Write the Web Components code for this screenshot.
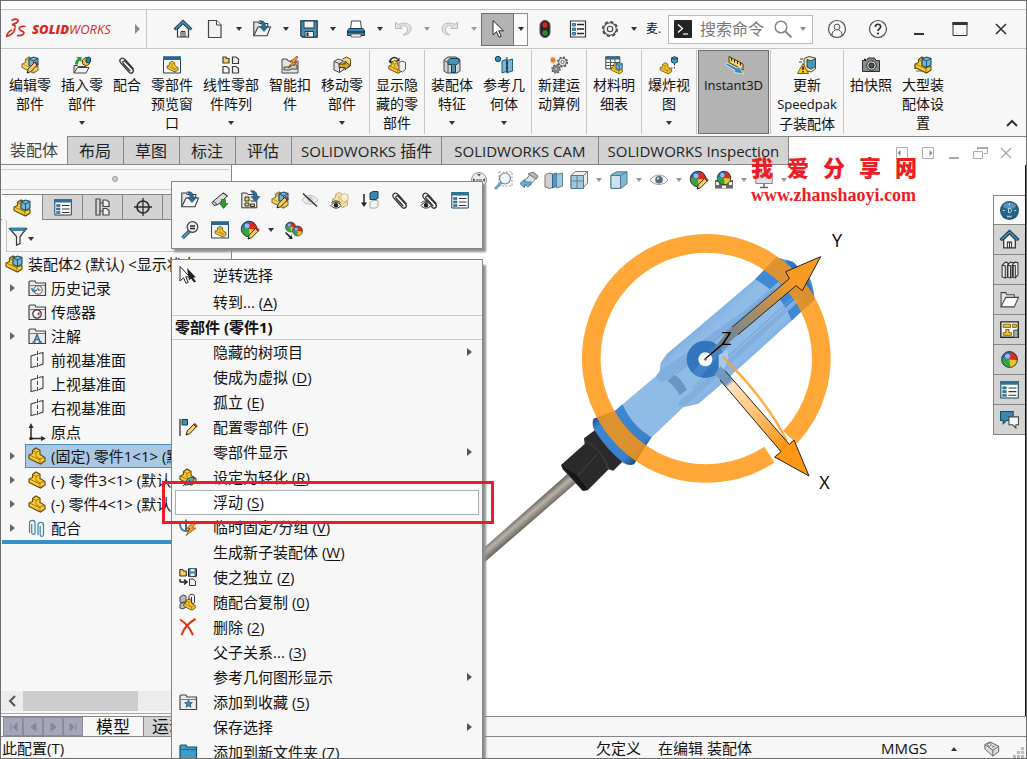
<!DOCTYPE html>
<html lang="zh-CN">
<head>
<meta charset="utf-8">
<title>SOLIDWORKS</title>
<style>
  html, body { margin: 0; height: 100%; }
  body { font: 15px/20px "Open Sans", "Noto Sans CJK SC", sans-serif; color: #111; background: #fff; }
</style>
</head>
<body>
<sw-window></sw-window>
<script>
/* ---------- icon fragments, drawn on an 18 x 18 grid ---------- */
const PART = `<path d="M4.500 3.500L8 1l4 2.300V7.500L17 10.500v3.500l-4.500 3L1 11.500V8l3.500-1.500z" fill="#f9cb2c" stroke="#5f430c" stroke-width="1.100"/><path d="M4.500 3.500L8 5.500v4l4 2.500v4.500M8 5.500l3.500-2M12 12l4.500-1.500M1.500 8L12 13" fill="none" stroke="#8a6412" stroke-width=".8"/>`;
const GHOST = `<path d="M4.500 3.500L8 1.500l3.500 2V8L16.500 10.500v3.500l-4.500 2.500L1.500 11V8l3-1.500z" fill="#f7e7ac" stroke="#c3ab67"/><path d="M1.500 8L12 13l4.500-2.500M8 9.500v-4L4.500 3.500" fill="none" stroke="#cbb880"/>`;
const CUBE = `<path d="M8 3l4.500-2L17 2.500v6.500L12.500 11.500 8 9.500z" fill="#79b4d3" stroke="#174f6b" stroke-width="1.100"/><path d="M8 3l4.500 2L17 2.500M12.500 5v6.500" fill="none" stroke="#174f6b"/>`;
const PENCIL = `<path d="M6 17l1.200-4 6.300-6.500 2.700 2.600-6.500 6.600z" fill="#f6cf62" stroke="#3c3323"/><path d="M13.500 6.500l1.200-1.200 2.700 2.600-1.200 1.200z" fill="#d03127" stroke="#5c1b16" stroke-width=".6"/><path d="M6 17l.6-2 1.500 1.400z" fill="#222"/>`;
const BALL = (x, y, r) => `<g transform="translate(${x} ${y}) scale(${r})"><circle r="1" fill="#36a43c"/><path d="M0 0L-.95-.2A1 1 0 0 1 .2-.98z" fill="#2c62c8"/><path d="M0 0L.2-.98A1 1 0 0 1 1 .1z" fill="#dd2a22"/><path d="M0 0L1 .1A1 1 0 0 1 .1 1z" fill="#e8c62a"/><circle cx="-.25" cy="-.4" r=".32" fill="#fff" opacity=".55"/><circle r="1" fill="none" stroke="#333" stroke-width=".12"/></g>`;
const FOLDER = (f = '#ececec', s = '#444') => `<path d="M1 16.500V3l1-1h5l1 2h9.500v12.500z" fill="${f}" stroke="${s}" stroke-width="1.200"/><path d="M2 6.500h15" stroke="${s}" stroke-width=".7"/>`;
const OPEN = `<path d="M.8 15.800V2h4.500l1 1.500h8.500v3" fill="#e4e4e4" stroke="#3d3d3d" stroke-width="1.100"/><path d="M.8 15.800L5 7h12.500l-3.500 8.800z" fill="#f6f6f6" stroke="#3d3d3d" stroke-width="1.100"/>`;
const DOWNARROW = `<path d="M6 1c4-.8 6.500.8 6.500 5.500H15.500L11 11.500 6.500 6.500h2.500c0-2.500-.5-4-3-5.500z" fill="#2c6d97" stroke="#174a68" stroke-width=".6"/>`;
const CLIP = (t = '') => `<g transform="${t}"><path d="M15.500 13L7 3.500C5.500 2 4 1.800 2.700 2.900s-1.200 2.600.2 4.200l8 9c1.200 1.200 2.600 1.400 3.700.4s1-2.300 0-3.500L7.500 5.500c-.7-.7-1.500-.8-2.200-.2s-.7 1.500 0 2.200l7 7.700" fill="none" stroke="#343434" stroke-width="1.300"/></g>`;
const TABLE = (h = '#2f7096') => `<path d="M.8 1.500h16.500v15.500H.8z" fill="#fff" stroke="#1c4257"/><path d="M.3 1h17.400v3.500H.3z" fill="${h}"/><path d="M2.500 6.500h3.500v2H2.500zM2.500 10h3.500v2H2.500zM2.500 13.500h3.500v2H2.500z" fill="#2f86b5" stroke="#174f6b" stroke-width=".5"/><path d="M8 7.500h7.500M8 11h7.500M8 14.500h7.500" stroke="#333"/>`;
const GEAR = (x, y, r, f) => `<g transform="translate(${x} ${y}) scale(${r})"><circle r=".85" fill="none" stroke="#4a4a4a" stroke-width=".28" stroke-dasharray=".34 .328"/><circle r=".7" fill="${f}" stroke="#4a4a4a" stroke-width=".16"/><circle r=".28" fill="#f7f7f7" stroke="#4a4a4a" stroke-width=".14"/></g>`;
const EYE = `<path d="M1 12.500c2.500-4 8-4 10 0-2.500 3.500-7.500 3.500-10 0z" fill="#fff" stroke="#333"/><circle cx="6" cy="12.300" r="2.200" fill="#222"/><path d="M1.500 9.500C4 7.500 8 7.500 10.500 9.500" stroke="#333" fill="none"/>`;
const DOT = (x, y) => `<path d="M${x} ${y}h3.500l2.500 2v4.500h-6z"/>`;
const HOUSE = `<path d="M3.500 9v8h11V9L9 3.500z" fill="#f4f4f4" stroke="#333" stroke-width="1.200"/><path d="M.6 9.500L9 1.500l8.400 8" fill="none" stroke="#173f57" stroke-width="3"/><path d="M1.500 9L9 2l7.500 7" fill="none" stroke="#4d9dc4" stroke-width="1.300"/><path d="M7 17v-5.500h4V17M9 11.500V17" fill="none" stroke="#333"/>`;

const ICONS = {
  home: HOUSE,
  new: `<path d="M2.500.5h8l4.500 4.500v12.500H2.500z" fill="#f1f1f1" stroke="#444" stroke-width="1.200"/><path d="M10.500.5V5H15" fill="#fff" stroke="#444"/>`,
  open: OPEN + DOWNARROW,
  folderopen: `<path d="M1 16V2.500h4.500l1 2h7V7" fill="#e3e3e3" stroke="#444"/><path d="M1 16L5.500 7h12L13.500 16z" fill="#fafafa" stroke="#444"/>`,
  save: `<path d="M.8.800h16.400v16.400H2.500L.8 15.500z" fill="#4a8fb3" stroke="#14323f" stroke-width="1.200"/><path d="M4 1h10v7H4z" fill="#f1f1f1" stroke="#1f3f4d"/><path d="M5 11.500h8.500V17H5z" fill="#eee" stroke="#1f3f4d"/><path d="M6.500 12.500h2V16h-2z" fill="#222"/>`,
  print: `<path d="M4.500 1h9l1 8.500H3.500z" fill="#fff" stroke="#444"/><path d="M2 8.500h14l1.500 2v5H.5v-5z" fill="#3c85ab" stroke="#143b50"/><path d="M.5 12h17" stroke="#143b50" stroke-width="1.500"/><path d="M4 14h10v3H4z" fill="#eee" stroke="#333" stroke-width=".7"/>`,
  undo: `<path d="M1.500 2v6.500h6.500L6 6.500c4.500-2 8 0 7.500 3.500-.3 2.300-2 4-4.500 5 5.500-.3 8-3 8-6.500C17 3.500 10 1.500 4 4.500z" fill="#e3e3e3" stroke="#b9b9b9"/>`,
  redo: `<path d="M16.500 2v6.500h-6.500L12 6.500c-4.500-2-8 0-7.500 3.500.3 2.300 2 4 4.500 5-5.500-.3-8-3-8-6.500C1 3.500 8 1.500 14 4.500z" fill="#e3e3e3" stroke="#b9b9b9"/>`,
  cursor: `<path d="M4 .5v14.500l3.500-3.300 2.500 5.600 2.200-1-2.500-5.500h4.800z" fill="#fff" stroke="#2b2b2b"/>`,
  traffic: `<rect x="4" y=".5" width="10" height="17" rx="5" fill="#262626" stroke="#555"/><circle cx="9" cy="5" r="2.700" fill="#d8241a"/><circle cx="9" cy="13" r="2.700" fill="#2f8f2c"/>`,
  options: `<path d="M1.500 1h15v16h-15z" fill="#fff" stroke="#333" stroke-width="1.200"/><path d="M3.500 3.500h3v2.500h-3zM3.500 8h3v2.500h-3zM3.500 12.500h3V15h-3z" fill="#5aa9d0" stroke="#1d5675" stroke-width=".8"/><path d="M8 4.500h7M8 9h7M8 13.500h7" stroke="#222" stroke-width="1.300"/>`,
  gear: `<circle cx="9" cy="9" r="7.300" fill="none" stroke="#444" stroke-width="1.600" stroke-dasharray="3.200 2.530"/><circle cx="9" cy="9" r="6.300" fill="#f7f7f7" stroke="#444" stroke-width="1.100"/><circle cx="9" cy="9" r="2.700" fill="none" stroke="#444" stroke-width="1.100"/>`,
  prompt: `<rect width="18" height="18" rx="1" fill="#242424"/><path d="M4 4.500L8.500 8.500 4 12.500" fill="none" stroke="#fff" stroke-width="1.300"/><path d="M9 14h5" stroke="#fff" stroke-width="1.200"/>`,
  search: `<circle cx="7" cy="7" r="5.800" fill="none" stroke="#858585" stroke-width="1.500"/><path d="M11 11l6.500 6.500" stroke="#858585" stroke-width="1.800"/>`,
  user: `<circle cx="9" cy="9" r="8.500" fill="none" stroke="#4d4d4d" stroke-width="1.200"/><circle cx="9" cy="7" r="2.900" fill="none" stroke="#4d4d4d"/><path d="M4 15c0-2.500 1.500-4.500 3.300-5M14 15c0-2.500-1.500-4.500-3.300-5" fill="none" stroke="#4d4d4d"/>`,
  help: `<circle cx="9" cy="9" r="8.500" fill="none" stroke="#4d4d4d" stroke-width="1.200"/><path d="M6.300 7c0-3.600 5.400-3.600 5.400-.2C11.700 8.800 9 8.700 9 11" fill="none" stroke="#333" stroke-width="1.700"/><circle cx="9" cy="13.500" r="1.100" fill="#333"/>`,
  min: `<path d="M4 14h10" stroke="#333" stroke-width="2"/>`,
  max: `<path d="M2 2.500h14v13H2z" fill="none" stroke="#333"/><path d="M1.500 2h15v3h-15z" fill="#333"/>`,
  close: `<path d="M4 4l10 10M14 4L4 14" stroke="#333" stroke-width="1.600"/>`,
  docprev: `<path d="M3.500 3.500h11v11h-11z" fill="none" stroke="#b0b0b0"/><path d="M7.500 6L4.500 9l3 3z" fill="#888"/>`,
  docnext: `<path d="M3.500 3.500h11v11h-11z" fill="none" stroke="#b0b0b0"/><path d="M10.500 6l3 3-3 3z" fill="#888"/>`,
  docmin: `<path d="M4 14h10" stroke="#aaa" stroke-width="2"/>`,
  docrest: `<path d="M6.500 6V3.500h10v6h-4" fill="none" stroke="#aaa"/><path d="M2.500 7.500h9v7h-9z" fill="#fff" stroke="#aaa"/><path d="M6 3h11v2H6z" fill="#aaa"/>`,
  docclose: `<path d="M4 4l10 10M14 4L4 14" stroke="#aaa" stroke-width="1.400"/>`,

  edit: `<g opacity=".75">${PART}</g>${CUBE}${PENCIL}`,
  insert: `<path d="M1 17V9.500h3.500l1 1h7v2" fill="#ddd" stroke="#444"/><path d="M1 17L4.500 11.500h11.500l-3 5.500z" fill="#f5f5f5" stroke="#444"/><path d="M2 8.500c0-3 1-5 3-6L3 1H8.500V6.500L7 4.500C5.500 5.500 5 6.500 5 8.500z" fill="#2c9a2f"/><path d="M9.500 4l3-2.500L16.500 3v5l-3 2-4-2z" fill="#f3c52d" stroke="#5c430f"/><path d="M13 2.500l2.500-1.500 2 1v4l-2 1L13 6z" fill="#2d7da8" stroke="#123f57"/>`,
  clip: CLIP(),
  preview: `<path d="M.5 1h17v16H.5z" fill="#f4f4f4" stroke="#26455a"/><path d="M0 .5h18v3.500H0z" fill="#2a678c"/><g transform="translate(3.500 4.500) scale(.68)">${PART}</g>`,
  pattern: `<g fill="#f1f1f1" stroke="#3c3c3c" stroke-width="1.200"><path d="M1 1h3l.5 1.500H7V7H1z" fill="#f2cf57"/>${DOT(10.5, 1)}${DOT(1, 10.500)}${DOT(10.500, 10.500)}</g>`,
  smart: `<path d="M1 17V3h5l1 2h10v12z" fill="#e2e2e2" stroke="#444"/><path d="M3 11h5l1-2h7v4h-6l-1 1H3z" fill="#cfcfcf" stroke="#444"/><path d="M16 0l-7 6h3l-4.500 6L16 6.500h-3L17 1z" fill="#f5a623" stroke="#7e3b08" stroke-width=".7"/>`,
  move: `<path d="M1 5.500l4-2.500 6 2v8.500l-4.500 3L1 14z" fill="#e3e3e3" stroke="#444"/><path d="M1 5.500L6.500 7.500l4.500-2.500M6.500 7.500v9" fill="none" stroke="#444"/><path d="M9.500 3l4-2L17.500 3v7l-4 2.500" fill="#f2d583" stroke="#6b5010"/><path d="M6 8h6V5l5 4.500-5 4.500V11.500H6z" fill="#d3a929" stroke="#3b2d07" stroke-width=".9"/>`,
  showhidden: `<g transform="translate(0 3.500) scale(.82)">${PART}</g><path d="M11 6.500l3-1.500 3.500 1.500v7l-3 2.500-3.500-1.500z" fill="#f1f1f1" stroke="#555"/><path d="M2 6C2 1.500 7 .5 9.500 3" fill="none" stroke="#222" stroke-width="1.500"/><path d="M8 5l3.500.5V1.500z" fill="#222"/><path d="M.5 4.500L2 7.500l3-2z" fill="#222"/>`,
  asmfeat: `<path d="M1 4l4-3h8l4 3v11l-3 2H4l-3-2z" fill="#d2d2d2" stroke="#444"/><path d="M5 4.500l2-2h9v4l-2 2h-1.500v8h-4V8.500H5z" fill="#4792bb" stroke="#153f56"/><path d="M8.500 8.500h5M1 4.500l4 2v10" stroke="#555" fill="none"/>`,
  refgeo: `<circle cx="3" cy="3" r="2.700" fill="#3b88b2" stroke="#184760"/><path d="M7 5l4.500-1.500v12L7 17zM12.500 4.500L17.500 3v12l-5 1.500z" fill="#7ab6d5" stroke="#235a78"/><path d="M12 1v17" stroke="#222" stroke-dasharray="3 1.500"/>`,
  motion: GEAR(12.500, 6, 5.600, '#eee') + GEAR(6, 13, 4.800, '#999') + `<path d="M3 0l.7 2 2-.7-.9 1.900 2 .8-2 .8.9 1.900-2-.7L3 8l-.7-2-2 .7.900-1.900L-.7 4l2-.8L.3 1.300l2 .7z" fill="#e2791c"/>`,
  bom: `<path d="M.8.800h14v12H.8z" fill="#fff" stroke="#444"/><path d="M.5.500h14.500v3H.5z" fill="#2c6d92"/><path d="M1 6.500h14M1 9.500h14M5.500 3v10M10 3v10" stroke="#555"/><g transform="translate(5.500 6) scale(.7)">${PART}${CUBE}</g>`,
  explode: `<g transform="translate(-.5 6) scale(.7)">${PART}</g><path d="M11.500 2l3-1.500L17.500 2v4l-3 1.500-3-1.500z" fill="#4b9ac4" stroke="#15475f"/><path d="M11.500 2l3 1.500L17.500 2" fill="none" stroke="#15475f"/><path d="M14.500 8v4H9" fill="none" stroke="#222" stroke-dasharray="1.500 1.500"/>`,
  ruler: `<path d="M4 .5l14 7.500v6L4 6.500z" fill="#f5d35d" stroke="#4b3a0c"/><path d="M6.500 2v3M9.500 3.500v3M12.500 5v3M15.500 6.500v3" stroke="#222"/><path d="M0 8.500l10 6-1 2 9.500 1.500-4.500-7.500-1.400 1.700L2 7z" fill="#3a8abb" stroke="#e8eef2" stroke-width=".8"/>`,
  speedpak: `<path d="M6 2.500L11 .5l6.500 1.500v11L13 16 6 14z" fill="#f3e2a5" stroke="#4c4c4c"/><path d="M9 3.500l4 1.500 4.500-2.500v8L13 13 9 11z" fill="#4a96bf" stroke="#164a63"/><path d="M5 7.500l5.500 10H-.5z" fill="#f9cb1f" stroke="#5a4200" stroke-width=".8"/><path d="M5 10.500v3.500M5 15v1.500" stroke="#111" stroke-width="1.500"/><path d="M2 3h3M1 6h3" stroke="#444"/>`,
  camera: `<path d="M.5 4.500h4L6 2h6.500L14 4.500h3.500v11H.5z" fill="#8b8b8b" stroke="#2d2d2d"/><circle cx="9.500" cy="9.500" r="4.700" fill="#ddd" stroke="#222"/><circle cx="9.500" cy="9.500" r="2.600" fill="#555" stroke="#111"/><path d="M2 3.500h2" stroke="#222" stroke-width="1.500"/>`,
  asm: PART + CUBE,
  large: `<path d="M0 10h4M0 12.500h5M2 15h6" stroke="#666"/>` + PART + CUBE,
  props: TABLE(),
  config: `<path d="M2 1h4v16H2zM6 5h4M6 13h4" fill="none" stroke="#444" stroke-width="1.200"/><path d="M9 2h3.500l2.500 2v4.500H9zM9 10.500h3.500l2.500 2V17H9z" fill="#eee" stroke="#444" stroke-width="1.200"/>`,
  target: `<circle cx="9" cy="9" r="6" fill="none" stroke="#2b2b2b" stroke-width="1.700"/><path d="M9 0v18M0 9h18" stroke="#2b2b2b" stroke-width="1.300"/>`,
  filter: `<path d="M.5 1.500h17L11 9.500v7l-3.500 1.500V9.500z" fill="#f6f6f6" stroke="#333" stroke-width="1.200"/><path d="M.5.500h17L15.500 4h-13z" fill="#3d83a8"/>`,
  history: FOLDER() + `<circle cx="10" cy="11" r="4.200" fill="#fff" stroke="#555"/><path d="M10 8.500V11h2.500" fill="none" stroke="#333"/><path d="M3.500 9l2 3.500 3.500-1.500" fill="none" stroke="#2e7da8" stroke-width="1.600"/>`,
  sensor: FOLDER() + `<circle cx="9" cy="11" r="4.200" fill="#fff" stroke="#333" stroke-width="1.200"/><path d="M9 11l2.500-2.500V13z" fill="#d32a1e"/>`,
  note: FOLDER() + `<path d="M4.500 15h3M10.500 15H14M6 15L9 7.500l3.200 7.500M7 12.500h4" fill="none" stroke="#2a6f97" stroke-width="1.500"/>`,
  plane: `<path d="M9.500 3L3 5v11.500L9.500 15M9.500 3L15 1.500V13L9.500 15" fill="none" stroke="#444" stroke-width="1.100"/><path d="M9.500 0v18" stroke="#f7f7f7" stroke-width="2"/><path d="M9.500 0v18" stroke="#444" stroke-dasharray="4 2"/>`,
  origin: `<path d="M3 17V3M3 15.500h13" fill="none" stroke="#2d2d2d" stroke-width="1.500"/><path d="M3 0L.500 5h5zM18 15.500L13 13v5z" fill="#2d2d2d"/><circle cx="3" cy="15.500" r="1.800" fill="#2d2d2d"/>`,
  part: PART,
  mates: `<path d="M1.500 14V4c0-3.500 5.500-3.500 5.500 0v9.500c0 2.500-3.300 2.500-3.300 0V5M10 16V6c0-3.500 5.500-3.500 5.500 0v9.500c0 2.500-3.300 2.500-3.300 0V7" fill="none" stroke="#3884ad" stroke-width="1.200"/>`,

  teach: `<path d="M.8 11.500L12 2l4.500 3L7 13.500l-4 1z" fill="#d8d8d8" stroke="#333"/><path d="M2 10.500c2 .5 3.500 2 3.500 3.500M12 2c2 .5 3.500 1.500 4 3.500" fill="none" stroke="#333"/><path d="M10.500 8.500h4v4H17l-4.500 5-4-5h2z" fill="#309a2b" stroke="#18600f" stroke-width=".6"/>`,
  openasm: `<path d="M.8 16.800V2h5l1 1.500h9v13.300z" fill="#e8e8e8" stroke="#333"/><path d="M4 6h4v4H4zM9.500 10h5M4 12h4v3H4zM9.500 13h4v2.500h-4z" fill="#f3cf45" stroke="#333"/><g transform="translate(3.500 -1)">${DOWNARROW}</g>`,
  hide: `<path d="M1 9c4-6 12-6 16 0-4 5.500-12 5.500-16 0z" fill="#eee" stroke="#bdbdbd"/><circle cx="9" cy="8.500" r="3" fill="#ccc"/><path d="M2 2.500l14 13" stroke="#333" stroke-width="1.500"/>`,
  hideghost: GHOST + `<path d="M10 4l3.500-1.500L17 4v5l-3.500 2L10 9z" fill="#faf0c8" stroke="#cbb880"/><g transform="translate(-1 2)">${EYE}</g>`,
  movedown: `<path d="M3 3v11" stroke="#222" stroke-width="1.500"/><path d="M0 11.500h6L3 16z" fill="#222"/><path d="M9 2l3-1.500h5V7l-2 1.500H9z" fill="#3e87b0" stroke="#183f55"/><path d="M9 11l3-1.500h5v6l-2 1.500H9z" fill="#f3f3f3" stroke="#aaa"/>`,
  clipeye: CLIP() + `<g transform="translate(-1 2)">${EYE}</g>`,
  magnify: `<path d="M9 9.500L1.500 17" stroke="#1f5371" stroke-width="3.500"/><path d="M9 9.500L1.500 17" stroke="#5ea9cf" stroke-width="1.500"/><circle cx="11.500" cy="6" r="5.300" fill="#f0f0f0" stroke="#3a4650" stroke-width="1.300"/><path d="M9 5h5M9 7.500h5" stroke="#222" stroke-width="1.300"/>`,
  appearance: BALL(8, 8, 7.800) + `<g transform="translate(1 1)">${PENCIL}</g>`,
  balls: BALL(5.500, 6, 5) + BALL(12.500, 10, 5) + `<path d="M1 11l5 4.500.500-2.500 1 5H3l2-1L0 12z" fill="#222"/>`,

  invert: `<path d="M8 2l9 9.500h-3l3 4-2 1-3-4-2 2z" fill="#222"/><path d="M1 .5v14.500l3.500-3.300 2.500 5.600 2.200-1-2.500-5.500h4z" fill="#fff" stroke="#222"/>`,
  confpart: `<path d="M1 1v17" stroke="#222" stroke-width="1.200"/><path d="M3 1.500h5.500V7H3z" fill="#4690b5" stroke="#123e55"/><g transform="translate(1 0)">${PENCIL}</g>`,
  light: PART + `<path d="M6 17c0-5 3-7.500 9-8 0 5-3 8-9 8z" fill="#57a3cb" stroke="#154a65"/><path d="M4 18l7-6" stroke="#154a65"/>`,
  tempfix: `<path d="M7 1.500v11M1 6c0 5 3 7 6 7 2 0 4-1 4.500-3M4 4h6" fill="none" stroke="#2e7a9f" stroke-width="2"/><path d="M15.500 3l-8 7.500h3.500L7 17.500 17 10h-3.500L17.500 4z" fill="#f4a425" stroke="#8a3f08" stroke-width=".7"/>`,
  indep: `<path d="M.8 1.500h3l.5 1.500h3v5H.8z" fill="#f0cd50" stroke="#333"/><path d="M9.500.8h8v7.500h-8z" fill="#3b83a9" stroke="#123"/><path d="M11.500 1h4v2.500h-4zM11.500 5.500h4V8h-4z" fill="#eee"/><path d="M1 14h6M5 11.500L8 14l-3 2.500M1 11v3" fill="none" stroke="#222" stroke-width="1.500"/><g fill="#eee" stroke="#333">${DOT(10.500, 11)}</g>`,
  copymate: `<path d="M1 4l3-2 3 1v5l-3 2-3-1zM1 11l3-2 3 1v4l-3 2-3-1z" fill="#bbb" stroke="#444"/><g transform="translate(4 5) scale(.72)">${PART}</g><path d="M10 7V3.500c0-3 5.500-3 5.500 0V9c0 2-3 2-3 0V4" fill="none" stroke="#333"/>`,
  delete: `<path d="M1 1.500c5 3 10 9 13 15.500M16.500 1C11 4 5 10 2.500 17" fill="none" stroke="#e02e12" stroke-width="2"/>`,
  fav: FOLDER() + `<path d="M9.500 6.800l1.100 2.600 2.800.2-2.100 1.900.7 2.800-2.500-1.500L7 14.300l.7-2.800-2.100-1.900 2.800-.2z" fill="#3c8cb5" stroke="#174e6c" stroke-width=".7"/>`,
  bluefolder: FOLDER('#3f9cc6', '#174e6c'),

  zoomfit: `<circle cx="9" cy="9" r="7.500" fill="#e9eef2" stroke="#8b959c"/><path d="M3 7v4l2.500-2zM15 7v4l-2.500-2zM7 3h4L9 5.500z" fill="#555"/><path d="M6 9h6" stroke="#555"/>`,
  zoomarea: `<path d="M4 1h13v14H4z" fill="none" stroke="#999" stroke-dasharray="2 1.500"/><path d="M7 11L0 18" stroke="#6aa5c6" stroke-width="3"/><circle cx="10" cy="7.500" r="5.500" fill="#edf2f5" stroke="#798892" stroke-width="1.200"/>`,
  prevview: `<path d="M2.500 12.500l8-9.500 6.500 3-9 10z" fill="#d6e1e8" stroke="#6d7a82"/><path d="M8 3l5-2 5 4-1.500 3z" fill="#b5b5b5" stroke="#777"/><path d="M0 12.500l4.500-4V11H11v3H4.500v2.500z" fill="#6caed0" stroke="#45819f"/>`,
  section: `<path d="M0 4l4-2 5 1.500v12L5 17.500 0 16z" fill="#cfcfcf" stroke="#777"/><path d="M7.500 3.500L11.500 2v13L7.500 17z" fill="#4a9bc8" stroke="#2c6a8c"/><path d="M11.500 3.500l6-1.500v13l-6 2z" fill="#9cc7dd" stroke="#5c8399"/>`,
  orient: `<path d="M1 4.500L5 .5h12.500V12l-4 4.500H1z" fill="#eee" stroke="#777"/><path d="M1 4.500h12.500v13H1z" fill="#9cc7dd" stroke="#4d7c94"/><path d="M13.500 4.500l4-4M1 10h12.500M7 4.500v13" stroke="#777"/>`,
  display: `<path d="M1 4L6.500.8H17v12l-6 4.500H1z" fill="#7fb8d6" stroke="#4d7a91"/><path d="M1 4.500h9.500v12.800H1z" fill="#cde2ee" stroke="#4d7a91"/><path d="M10.500 4.500L17 .8" stroke="#4d7a91"/>`,
  eye: `<path d="M0 9c4-6.500 14-6.500 18 0-4 6-14 6-18 0z" fill="#f4f4f4" stroke="#999"/><circle cx="9" cy="8.800" r="3.800" fill="#5c6b75"/><circle cx="8" cy="7.500" r="1" fill="#fff"/>`,
  scene: `<path d="M0 9h18v8.500H0z" fill="#666"/><path d="M1 11h3v3H1zM7 14.500h4V17H7zM14 11h3v3h-3z" fill="#eee"/>` + BALL(9, 7, 6.800),
  monitor: `<path d="M.8 2h16.500v10.500H.8z" fill="#e1e1e1" stroke="#888"/><path d="M9 12.500V16M5 16.500h8" stroke="#666" stroke-width="1.500"/>`,

  compass: `<circle cx="9" cy="9" r="9" fill="#1b4f70"/><circle cx="9" cy="9" r="7.800" fill="#256489"/><ellipse cx="9" cy="4.500" rx="6" ry="3" fill="#7fb4d2" opacity=".6"/><path d="M8 7h1c2.500 0 2.500 4 0 4H8z" fill="none" stroke="#cfe3ef" stroke-width=".9"/><path d="M9 2v2M2.500 9h2M13.500 9h2M7 14l.7 1.500L9 14l1 1.500.8-1.500" stroke="#cfe3ef" fill="none" stroke-width=".9"/>`,
  library: `<path d="M2 5l3-3 2.500.5V16L5 17l-3-1zM7 5l3-3 2.500.500V16L10 17l-3-1zM11.500 5l2.500-3 3 .5V14l-2.500 3-3-1z" fill="#ececec" stroke="#333"/><path d="M2 5l3 .5V17M7 5l3 .5V17M11.500 5l3 .5V17" fill="none" stroke="#333"/>`,
  palette: `<path d="M.8 1.800h16.500v14.500H.8z" fill="#fff" stroke="#222" stroke-width="1.300"/><path d="M3 4h7v3H3zM12 4h3.500v3H12zM5.500 9h3v3h2.500v2.500H3V12h2.500z" fill="#f4c52e" stroke="#6e4f08" stroke-width=".8"/><path d="M13 9.500h4v7h-4z" fill="#aaa" stroke="#333" stroke-width=".8"/>`,
  ball: BALL(9, 9, 7.500),
  chat: `<path d="M.5 1.500h12v8.500H6l-3 3v-3H.5z" fill="#3b86ad" stroke="#184a64"/><path d="M8.500 6.500h9V14H15v3l-3-3H8.500z" fill="#f6f6f6" stroke="#444"/>`,
  tag: `<path d="M1 4l6-3 9.500 5v6L10 17 1 9z" fill="#e0e0e0" stroke="#555"/><path d="M1 4l9 6.500L16.500 6M10 10.500V17" fill="none" stroke="#555"/><circle cx="6" cy="4" r="1.800" fill="#fff" stroke="#555"/><path d="M9 7l3-1.500" stroke="#555"/>`
};

/* ---------- small helper for declaring elements ---------- */
function define(tag, css, html) {
  customElements.define(tag, class extends HTMLElement {
    constructor() { super(); this.attachShadow({ mode: 'open' }); }
    connectedCallback() {
      this.shadowRoot.innerHTML = `<style>*{box-sizing:border-box}:host{box-sizing:border-box}button{font:inherit;color:inherit;border:0;padding:0;margin:0;background:none;border-radius:0}${css}</style>` +
        (typeof html === 'function' ? html(this) : html);
    }
  });
}
const a = (el, n, d = '') => el.getAttribute(n) ?? d;

define('sw-icon', `:host{display:block;flex:none;width:var(--icon,18px);height:var(--icon,18px)}svg{display:block;width:100%;height:100%;overflow:visible}`,
  el => `<svg viewBox="0 0 18 18" aria-hidden="true">${ICONS[a(el, 'name')] || ''}</svg>`);

define('sw-caret', `:host{display:block;width:0;height:0;border:3px solid transparent;border-top:4px solid var(--caret,#333);border-bottom:0}`, '');

/* Tool button: an icon, with a drop-down part when it has "menu" */
define('sw-tool', `:host{display:flex;height:100%}button{display:grid;place-items:center;height:100%;width:var(--w,33px)}
  .drop{width:15px}:host([menu]) .main{width:var(--w,32px)}
  :host([dim]){--caret:#999}
  :host([pressed]){height:33px;align-self:center}:host([pressed]) .main{width:33px;background:#b3b3b3;border:1px solid #6f6f6f}
  :host([pressed]) .drop{width:14px;background:#fafafa;border:1px solid #8c8c8c;border-left:0}`,
  el => `<button class="main" aria-label="${a(el, 'label')}"><sw-icon name="${a(el, 'icon')}"></sw-icon></button>` +
    (el.hasAttribute('menu') ? `<button class="drop" aria-label="更多"><sw-caret></sw-caret></button>` : ''));

define('sw-titlebar', `:host{display:block;border-top:1px solid #c6c6c6;border-bottom:1px solid #c6c6c6;margin-top:8px;background:#f7f7f7}
  .bar{display:flex;height:38px;align-items:center}
  .brand{display:flex;align-items:center;width:146px;height:100%;border-right:1px solid #c6c6c6;padding-left:5px;color:#da291c}
  .brand svg{flex:none}.name{font:italic 13px/20px "Open Sans",sans-serif;margin-left:4px}.name b{font-weight:800}
  .go{width:0;height:0;border:5px solid transparent;border-left-color:#8a8a8a;border-right:0;margin-left:auto;margin-right:6px}
  .tools{display:flex;height:100%;padding-left:19px}
  .cut{align-self:center;width:27px;font-size:12px;padding-left:5px;white-space:nowrap;overflow:hidden}
  .search{display:flex;align-items:center;width:145px;height:29px;border:1px solid #b9b9b9;background:#fff;padding:0 4px 0 5px;gap:8px}
  .search input{font:16px/20px "Open Sans","Noto Sans CJK SC",sans-serif;border:0;padding:0;width:66px;min-width:0;background:none;outline:0}
  .search input::placeholder{color:#777;opacity:1}.search sw-caret{--caret:#888}
  .win{display:flex;height:100%;margin-left:auto;padding-right:5px}`,
  `<header class="bar"><div class="brand"><svg width="22" height="22" viewBox="0 0 22 22" fill="none" stroke="#da291c" stroke-width="1.700"><path d="M5.500 2.500c4-2 7-1.500 6.500.3C11.500 5 8.500 6 6 6.500c2.500.5 3.500 1.500 3 3M9 10c-.5 3.500-3 7-8.500 8.500 1-3.500 2.500-5.500 5.500-6.500"/><path d="M19.500 8.500c-4-.8-6.500.5-6.300 2.500.2 1.800 5 2 4.800 4-.2 2-3.500 3-7 2.300"/></svg>
    <span class="name"><b>SOLID</b>WORKS</span><i class="go"></i></div>
  <nav class="tools"><sw-tool icon="home" label="主页"></sw-tool><sw-tool icon="new" label="新建" menu></sw-tool><sw-tool icon="open" label="打开" menu></sw-tool><sw-tool icon="save" label="保存" menu></sw-tool><sw-tool icon="print" label="打印" menu></sw-tool><sw-tool icon="undo" label="撤销" menu dim></sw-tool><sw-tool icon="redo" label="重做" menu dim></sw-tool><sw-tool icon="cursor" label="选择" menu pressed></sw-tool><sw-tool icon="traffic" label="重建模型"></sw-tool><sw-tool icon="options" label="文件属性"></sw-tool><sw-tool icon="gear" label="选项" menu></sw-tool></nav>
  <span class="cut">麦.</span>
  <label class="search"><sw-icon name="prompt"></sw-icon><input placeholder="搜索命令" aria-label="搜索命令"><sw-icon name="search"></sw-icon><sw-caret></sw-caret></label>
  <nav class="win" style="--w:41px"><sw-tool icon="user" label="登录"></sw-tool><sw-tool icon="help" label="帮助"></sw-tool><sw-tool icon="min" label="最小化"></sw-tool><sw-tool icon="max" label="最大化"></sw-tool><sw-tool icon="close" label="关闭"></sw-tool></nav></header>`);

define('sw-command', `:host{display:block;--text:42px}button{display:flex;flex-direction:column;align-items:center;width:calc(var(--text) + 10px);height:100%;padding:6px 0 0;font-size:14px;line-height:19px}
  .label{width:var(--text);margin-top:1px;text-align:center}
  sw-caret{margin-top:8px}:host([wide]){--text:56px}:host([short]){--text:28px}:host([broad]){--text:60px}
  :host([pressed]) button{background:#b3b3b3;border:1px solid #6f6f6f;padding-top:5px}:host([pressed]){--text:61px}
  ::slotted(span){font-size:13px}`,
  el => `<button><sw-icon name="${a(el, 'icon')}"></sw-icon><span class="label"><slot></slot></span>${el.hasAttribute('menu') ? '<sw-caret></sw-caret>' : ''}</button>`);

define('sw-group', `:host{display:flex;padding:0 1px;border-right:1px solid #c6c6c6}:host([last]){border:0}`, '<slot></slot>');

define('sw-ribbon', `:host{display:flex;height:87px;padding:1px 0 2px 2px;background:#f7f7f7;white-space:normal}
  .fold{margin-left:auto;align-self:flex-end;width:29px;height:22px;display:grid;place-items:center}`,
  `<sw-group><sw-command icon="edit">编辑零部件</sw-command><sw-command icon="insert" menu>插入零部件</sw-command><sw-command icon="clip" short>配合</sw-command><sw-command icon="preview">零部件预览窗口</sw-command><sw-command icon="pattern" wide menu>线性零部件阵列</sw-command><sw-command icon="smart">智能扣件</sw-command><sw-command icon="move" menu>移动零部件</sw-command></sw-group>
  <sw-group><sw-command icon="showhidden">显示隐藏的零部件</sw-command></sw-group>
  <sw-group><sw-command icon="asmfeat" menu>装配体特征</sw-command><sw-command icon="refgeo" menu>参考几何体</sw-command></sw-group>
  <sw-group><sw-command icon="motion">新建运动算例</sw-command></sw-group>
  <sw-group><sw-command icon="bom">材料明细表</sw-command></sw-group>
  <sw-group><sw-command icon="explode" menu>爆炸视图</sw-command></sw-group>
  <sw-group><sw-command icon="ruler" pressed><span>Instant3D</span></sw-command></sw-group>
  <sw-group><sw-command icon="speedpak" broad>更新<br><span>Speedpak</span><br>子装配体</sw-command></sw-group>
  <sw-group last><sw-command icon="camera">拍快照</sw-command><sw-command icon="large">大型装配体设置</sw-command></sw-group>
  <button class="fold" aria-label="折叠"><svg width="12" height="8" viewBox="0 0 12 8"><path d="M1 7l5-5 5 5" fill="none" stroke="#333" stroke-width="2"/></svg></button>`);

define('sw-tabs', `:host{display:flex;height:29px;border-top:1px solid #858585;background:#fff;font-size:16px}
  button{height:28px;padding:0 12px 0 11px;border-right:1px solid #858585;border-bottom:1px solid #858585;background:#d3d3d3;color:#222;white-space:nowrap}
  button.on{background:#f7f7f7;padding:0 9px;margin-top:-1px;height:29px;color:#444}
  button.tight{padding:0 9px}button.loose{padding:0 12px}
  .latin{font-size:15px}.win{display:flex;margin-left:auto;padding-right:7px;height:31px}`,
  `<button class="on">装配体</button><button>布局</button><button>草图</button><button>标注</button><button>评估</button><button class="tight"><span class="latin">SOLIDWORKS</span> 插件</button><button class="loose"><span class="latin">SOLIDWORKS CAM</span></button><button class="tight"><span class="latin">SOLIDWORKS Inspection</span></button>
  <nav class="win" style="--w:26px"><sw-tool icon="docprev" label="上一个"></sw-tool><sw-tool icon="docnext" label="下一个"></sw-tool><sw-tool icon="docmin" label="最小化"></sw-tool><sw-tool icon="docrest" label="还原"></sw-tool><sw-tool icon="docclose" label="关闭文档"></sw-tool></nav>`);

define('sw-node', `:host{display:flex;align-items:center;height:24px;white-space:nowrap}
  .arrow{width:0;height:0;border:4px solid transparent;border-left:5px solid #666;border-right:0;margin-left:9px;visibility:hidden}
  :host([branch]) .arrow{visibility:visible}
  .body{display:flex;align-items:center;gap:5px;margin-left:10px;padding:0 2px;height:24px;flex:1;border:1px solid transparent}
  :host([root]) .arrow{display:none}:host([root]) .body{margin-left:1px;gap:5px}
  :host([selected]) .body{background:#a9c8e4;border-color:#4b8fc0}`,
  el => `<i class="arrow"></i><span class="body"><sw-icon name="${a(el, 'icon')}"></sw-icon><span><slot></slot></span></span>`);

define('sw-manager', `:host{display:flex;flex-direction:column;width:231px;border-right:1px solid #858585;background:#f7f7f7;overflow:hidden}
  .grip{height:25px;margin:0 2px 4px 0;border-bottom:1px solid #cfcfcf;display:grid;place-items:center;position:relative}
  .grip::before{content:"";position:absolute;inset:4px 0 auto 0;border-top:1px solid #cfcfcf}
  .grip i{width:6px;height:6px;border-radius:50%;background:#ccc;border:1px solid #999;margin-top:4px}
  .tabs{display:flex;height:26px;padding-left:1px;border-bottom:1px solid #858585;--w:40px}
  .tabs sw-tool{border-right:1px solid #858585;border-top:1px solid #858585;background:#d3d3d3;--w:39px}
  .tabs sw-tool.on{background:#f7f7f7;--w:40px;height:26px}.tabs .rest{flex:1;background:#d3d3d3;border-top:1px solid #858585}
  .filter{display:flex;align-items:center;gap:1px;height:32px;margin:0 5px;padding-left:2px;border:1px solid #c6c6c6;border-top:0}.filter sw-caret{margin-top:6px}
  sw-node{width:300px}.bar{height:4px;margin-left:1px;background:#3390c8;flex:none}
  .space{flex:1}.scroll{display:flex;height:20px;background:#ececec;margin-bottom:2px;flex:none}
  .scroll button{width:22px}.thumb{width:115px;background:#cdcdcd}.foot{height:3px;border-top:1px solid #aaa;flex:none}`,
  `<div class="grip"><i></i></div>
  <nav class="tabs"><sw-tool class="on" icon="asm" label="特征树"></sw-tool><sw-tool icon="props" label="属性"></sw-tool><sw-tool icon="config" label="配置"></sw-tool><sw-tool icon="target" label="尺寸"></sw-tool><span class="rest"></span></nav>
  <div class="filter"><sw-icon name="filter"></sw-icon><sw-caret></sw-caret></div>
  <sw-node root icon="asm">装配体2 (默认) &lt;显示状态-1&gt;</sw-node>
  <sw-node branch icon="history">历史记录</sw-node><sw-node icon="sensor">传感器</sw-node><sw-node branch icon="note">注解</sw-node>
  <sw-node icon="plane">前视基准面</sw-node><sw-node icon="plane">上视基准面</sw-node><sw-node icon="plane">右视基准面</sw-node><sw-node icon="origin">原点</sw-node>
  <sw-node branch selected icon="part">(固定) 零件1&lt;1&gt; (默认)</sw-node><sw-node branch icon="part">(-) 零件3&lt;1&gt; (默认)</sw-node><sw-node branch icon="part">(-) 零件4&lt;1&gt; (默认)</sw-node><sw-node branch icon="mates">配合</sw-node>
  <div class="bar"></div><div class="space"></div>
  <div class="scroll"><button aria-label="向左滚动"><svg width="8" height="12" viewBox="0 0 8 12"><path d="M7 1L2 6l5 5" fill="none" stroke="#555" stroke-width="2"/></svg></button><div class="thumb"></div></div><div class="foot"></div>`);

/* Model drawing with its move and rotate triad */
define('sw-model', `:host{display:block;width:380px;height:350px}svg{display:block;overflow:visible}text{font:54px "Open Sans",sans-serif;fill:#000}`,
  `<svg width="380" height="350" viewBox="0 0 1140 1050" role="img" aria-label="螺丝刀模型">
  <defs>
    <linearGradient id="steel" gradientUnits="userSpaceOnUse" x1="130" y1="875" x2="158" y2="908"><stop offset="0" stop-color="#6b6560"/><stop offset=".4" stop-color="#b8b2ab"/><stop offset="1" stop-color="#5a5550"/></linearGradient>
    <linearGradient id="gy" gradientUnits="userSpaceOnUse" x1="690" y1="400" x2="930" y2="190"><stop offset="0" stop-color="#5d7fa0"/><stop offset=".45" stop-color="#8f8b7c"/><stop offset=".75" stop-color="#c58f4d"/><stop offset="1" stop-color="#f79a22"/></linearGradient>
    <linearGradient id="gx" gradientUnits="userSpaceOnUse" x1="700" y1="440" x2="910" y2="680"><stop offset="0" stop-color="#6f9fc9"/><stop offset=".2" stop-color="#6f95b8"/><stop offset=".24" stop-color="#ffe3bb"/><stop offset=".6" stop-color="#ffc071"/><stop offset="1" stop-color="#ff9714"/></linearGradient>
    <linearGradient id="edge" gradientUnits="userSpaceOnUse" x1="640" y1="335" x2="760" y2="470"><stop offset="0" stop-color="#82b1e1"/><stop offset=".15" stop-color="#90bbe7"/><stop offset=".8" stop-color="#8fbbe7"/><stop offset="1" stop-color="#81afdf"/></linearGradient>
    <linearGradient id="dark" gradientUnits="userSpaceOnUse" x1="365" y1="575" x2="490" y2="715"><stop offset="0" stop-color="#1d528c"/><stop offset=".15" stop-color="#3e86d1"/><stop offset=".8" stop-color="#3a80c9"/><stop offset="1" stop-color="#163f6b"/></linearGradient>
  </defs>
  <path d="M262 762L287 790 10 1030V985z" fill="url(#steel)"/>
  <path d="M345 630L312 655 314 672 243 735 248 748 308 812 324 810 386 748 400 752 430 722z" fill="#2a2a2a"/>
  <path d="M314 662Q365 685 386 748M350 705L288 772" fill="none" stroke="#484848" stroke-width="3"/><path d="M243 735L270 765 308 812 324 810 290 765z" fill="#171717"/>
  <path d="M405 572L340 596Q335 612 342 628 380 690 430 728 445 738 462 733L515 652 428 553z" fill="url(#dark)"/>
  <path d="M825 178L888 112Q935 120 985 165 1000 195 1004 238L935 302z" fill="#3f88d2"/><path d="M940 126Q985 165 1004 238L980 262Q965 175 915 118z" fill="#2f76bf"/>
  <path d="M825 178L660 318 560 402 542 428 538 460 428 553Q455 618 515 652L610 562 655 551 710 505 935 302Q905 220 825 178z" fill="url(#edge)"/>
  <path d="M528 468Q536 496 566 478L620 434 905 196 895 186 800 266 540 452z" fill="#80afdf"/>
  <path d="M594 548Q594 566 620 554L660 518 954 246 948 235 628 520z" fill="#80afdf"/>
  <path d="M590 462L885 205" stroke="#6c9fd2" stroke-width="3"/><path d="M640 502L940 232" stroke="#6c9fd2" stroke-width="3"/>
  <path d="M562 482Q592 505 598 526L620 510Q608 480 584 464z" fill="#6795c4"/>
  <circle cx="676" cy="418" r="56" fill="#2a6fb8" opacity=".9"/>
  <path d="M636 460L700 384 732 350 750 372 716 408 660 472z" fill="#4a8bd0" opacity=".65"/>
  <path d="M742 390A68 68 0 0 1 735 442L716 455 716 405z" fill="#a7caec"/>
  <path d="M930 652A345 345 0 1 0 868 704" fill="none" stroke="#ff9610" stroke-width="56" opacity=".82"/>
  <path d="M930 652A345 345 0 1 0 868 704" fill="none" stroke="#ff8c00" stroke-width="54" stroke-dasharray="2 5" opacity=".18"/>
  <path d="M728 410Q860 540 920 662" fill="none" stroke="#ffa02d" stroke-width="8" opacity=".85"/>
  <path d="M705 462L903 695 884 711 987 768 942 660 928 673 722 438z" fill="url(#gx)"/>
  <path d="M720 480L903 695 884 711 987 768 942 660 928 673 735 452" fill="none" stroke="#222" stroke-width="3"/>
  <path d="M690 404L740 335 928 176 917 155 1022 110 967 212 948 197 770 348 700 405z" fill="url(#gy)"/>
  <path d="M756 322L928 176 917 155 1022 110 967 212 948 197 774 344" fill="none" stroke="#222" stroke-width="3"/>
  <circle cx="676" cy="418" r="21" fill="#fff"/><path d="M676 416L735 366" stroke="#000" stroke-width="4"/><circle cx="676" cy="418" r="4" fill="#666"/>
  <text x="1056" y="80">Y</text><text x="1018" y="806">X</text><text x="724" y="374">Z</text></svg>`);

define('sw-viewport', `:host{display:block;position:relative;min-width:0;background:#fff;border-right:1px solid #111;overflow:hidden}
  .hud{display:flex;justify-content:center;height:30px;--w:25px;--caret:#999}
  sw-model{position:absolute;left:248px;top:55px}
  sw-tool[menu]{--w:25px}.pane{position:absolute;right:0;top:30px;width:32px;border:1px solid #858585;border-right:0;background:#d3d3d3;--icon:19px}
  .pane sw-tool{height:30px;--w:31px;border-bottom:1px solid #858585}.pane sw-tool:last-child{border:0;height:29px}.pane sw-tool:first-child{background:#fafafa;height:29px}`,
  `<nav class="hud"><sw-tool icon="zoomfit" label="整屏显示"></sw-tool><sw-tool icon="zoomarea" label="局部放大"></sw-tool><sw-tool icon="prevview" label="上一视图"></sw-tool><sw-tool icon="section" label="剖面视图"></sw-tool><sw-tool icon="orient" label="视图定向" menu></sw-tool><sw-tool icon="display" label="显示样式" menu></sw-tool><sw-tool icon="eye" label="隐藏项目" menu></sw-tool><sw-tool icon="appearance" label="编辑外观"></sw-tool><sw-tool icon="scene" label="应用布景" menu></sw-tool><sw-tool icon="monitor" label="视图设定" menu></sw-tool></nav>
  <sw-model></sw-model>
  <nav class="pane"><sw-tool icon="compass" label="资源"></sw-tool><sw-tool icon="home" label="主页"></sw-tool><sw-tool icon="library" label="设计库"></sw-tool><sw-tool icon="folderopen" label="文件探索器"></sw-tool><sw-tool icon="palette" label="视图调色板"></sw-tool><sw-tool icon="ball" label="外观"></sw-tool><sw-tool icon="props" label="自定义属性"></sw-tool><sw-tool icon="chat" label="论坛"></sw-tool></nav>`);

define('sw-study-bar', `:host{display:flex;height:21px;border-top:1px solid #858585;border-bottom:1px solid #858585;background:#f7f7f7;font-size:17px}
  .nav{display:flex;padding-left:2px}.nav button{width:20px;height:19px;background:#a6a6ba;border:1px solid #8b8ba0;display:grid;place-items:center}
  .tab{width:61px;line-height:18px;border-right:1px solid #858585;text-align:center}.next{background:#d3d3d3;text-align:left;padding:0 8px;width:auto;white-space:nowrap}`,
  `<div class="nav">${['M4 2v8M10 2L6 6l4 4z', 'M9 2L4 6l5 4z', 'M4 2l5 4-5 4z', 'M9 2v8M3 2l4 4-4 4z'].map((d, i) => `<button aria-label="${['首页', '上页', '下页', '末页'][i]}"><svg width="12" height="12"><path d="${d}" fill="#85859c" stroke="#85859c"/></svg></button>`).join('')}</div><button class="tab">模型</button><button class="tab next">运动算例 1</button>`);

define('sw-status', `:host{display:flex;align-items:center;height:21px;background:#f7f7f7;padding:2px 0 0 1px;line-height:19px;white-space:nowrap}
  .right{display:flex;align-items:center;margin-left:auto}.a{width:62px}.b{width:223px}.c{width:70px}.up{width:0;height:0;border:3px solid transparent;border-bottom:4px solid #333;border-top:0;margin-right:27px}
  .grip{width:12px;height:12px;margin-left:12px;margin-right:2px;align-self:flex-end;fill:#bbb}sw-icon{--icon:16px}`,
  `<span>此配置(T)</span><div class="right"><span class="a">欠定义</span><span class="b">在编辑 装配体</span><span class="c">MMGS</span><i class="up"></i><sw-icon name="tag"></sw-icon><svg class="grip" viewBox="0 0 12 12"><path d="M9 1h3v3H9zM5 5h3v3H5zM9 5h3v3H9zM1 9h3v3H1zM5 9h3v3H5zM9 9h3v3H9z"/></svg></div>`);

define('sw-quick-bar', `:host{display:grid;grid-template-columns:repeat(10,30px);grid-auto-rows:30px;width:312px;height:68px;padding:3px 3px;background:#f7f7f7;border:1px solid #858585;box-shadow:3px 3px 2px #909090;--w:30px}
  sw-tool{--w:30px;height:30px}sw-caret{place-self:center start;margin-left:3px}.shift{margin-left:-16px}`,
  `${['open', 'teach', 'openasm', 'edit', 'hide', 'hideghost', 'movedown', 'clip', 'clipeye', 'props', 'magnify', 'preview', 'appearance'].map((n, i) => `<sw-tool icon="${n}" label="命令 ${i + 1}"></sw-tool>`).join('')}<sw-caret></sw-caret><sw-tool class="shift" icon="balls" label="复制外观"></sw-tool>`);

define('sw-menu-item', `:host{display:block}button{display:flex;align-items:center;gap:16px;width:100%;height:var(--row,25px);padding:0 10px 2px 7px;text-align:left;white-space:nowrap}
  .sub{margin-left:auto;width:0;height:0;border:4px solid transparent;border-left:5px solid #555;border-right:0}
  :host([active]) button{width:calc(100% - 6px);margin:0 3px;padding:0 10px 1px 3px;border:1px solid #ababab;background:#fff}`,
  el => `<button role="menuitem"><sw-icon name="${a(el, 'icon')}"></sw-icon><span><slot></slot></span>${el.hasAttribute('sub') ? '<i class="sub"></i>' : ''}</button>`);

define('sw-context-menu', `:host{display:block;width:312px;padding-top:2px;background:#f7f7f7;border:1px solid #858585;box-shadow:3px 6px 2px #909090}
  .head{--row:27px;height:53px}h2{margin:0;border-top:1px solid #c6c6c6;border-bottom:1px solid #c6c6c6;font-size:15px;line-height:23px;padding-left:3px}u{text-underline-offset:2px}`,
  `<div class="head"><sw-menu-item icon="invert">逆转选择</sw-menu-item><sw-menu-item>转到... (<u>A</u>)</sw-menu-item></div><h2>零部件 (零件1)</h2>
  <sw-menu-item sub>隐藏的树项目</sw-menu-item><sw-menu-item>使成为虚拟 (<u>D</u>)</sw-menu-item><sw-menu-item>孤立 (<u>E</u>)</sw-menu-item><sw-menu-item icon="confpart">配置零部件 (<u>F</u>)</sw-menu-item><sw-menu-item sub>零部件显示</sw-menu-item><sw-menu-item icon="light">设定为轻化 (<u>R</u>)</sw-menu-item><sw-menu-item active>浮动 (<u>S</u>)</sw-menu-item><sw-menu-item icon="tempfix">临时固定/分组 (<u>V</u>)</sw-menu-item><sw-menu-item>生成新子装配体 (<u>W</u>)</sw-menu-item><sw-menu-item icon="indep">使之独立 (<u>Z</u>)</sw-menu-item><sw-menu-item icon="copymate">随配合复制 (<u>0</u>)</sw-menu-item><sw-menu-item icon="delete">删除 (<u>2</u>)</sw-menu-item><sw-menu-item>父子关系... (<u>3</u>)</sw-menu-item><sw-menu-item sub>参考几何图形显示</sw-menu-item><sw-menu-item icon="fav">添加到收藏 (<u>5</u>)</sw-menu-item><sw-menu-item sub>保存选择</sw-menu-item><sw-menu-item icon="bluefolder">添加到新文件夹 (<u>7</u>)</sw-menu-item>`);

define('sw-watermark', `:host{display:block;color:#ee1c25}.cn{display:flex;gap:14px;font:900 22px/24px "Noto Sans CJK SC",sans-serif}a{display:block;color:inherit;text-decoration:none;font:bold 18px/22px "Liberation Serif",serif;margin-top:6px}`,
  `<div class="cn"><span>我</span><span>爱</span><span>分</span><span>享</span><span>网</span></div><a href="#">www.zhanshaoyi.com</a>`);

define('sw-window', `:host{display:grid;grid-template-rows:auto auto auto minmax(0,1fr) auto auto;grid-template-columns:minmax(0,1fr);height:100vh;position:relative;border:1px solid #6e6e6e;overflow:hidden;background:#fff}
  main{display:grid;grid-template-columns:auto minmax(0,1fr);min-height:0}
  sw-quick-bar,sw-context-menu,sw-watermark,.mark{position:absolute}
  sw-context-menu{left:170px;top:258px}sw-quick-bar{left:170px;top:180px}
  sw-watermark{left:750px;top:153px}.mark{left:161px;top:480px;width:332px;height:43px;border:3px solid #ed1c24}`,
  `<sw-titlebar></sw-titlebar><sw-ribbon></sw-ribbon><sw-tabs></sw-tabs><main><sw-manager></sw-manager><sw-viewport></sw-viewport></main><sw-study-bar></sw-study-bar><sw-status></sw-status>
  <sw-context-menu></sw-context-menu><sw-quick-bar></sw-quick-bar><div class="mark"></div><sw-watermark></sw-watermark>`);
</script>
</body>
</html>
